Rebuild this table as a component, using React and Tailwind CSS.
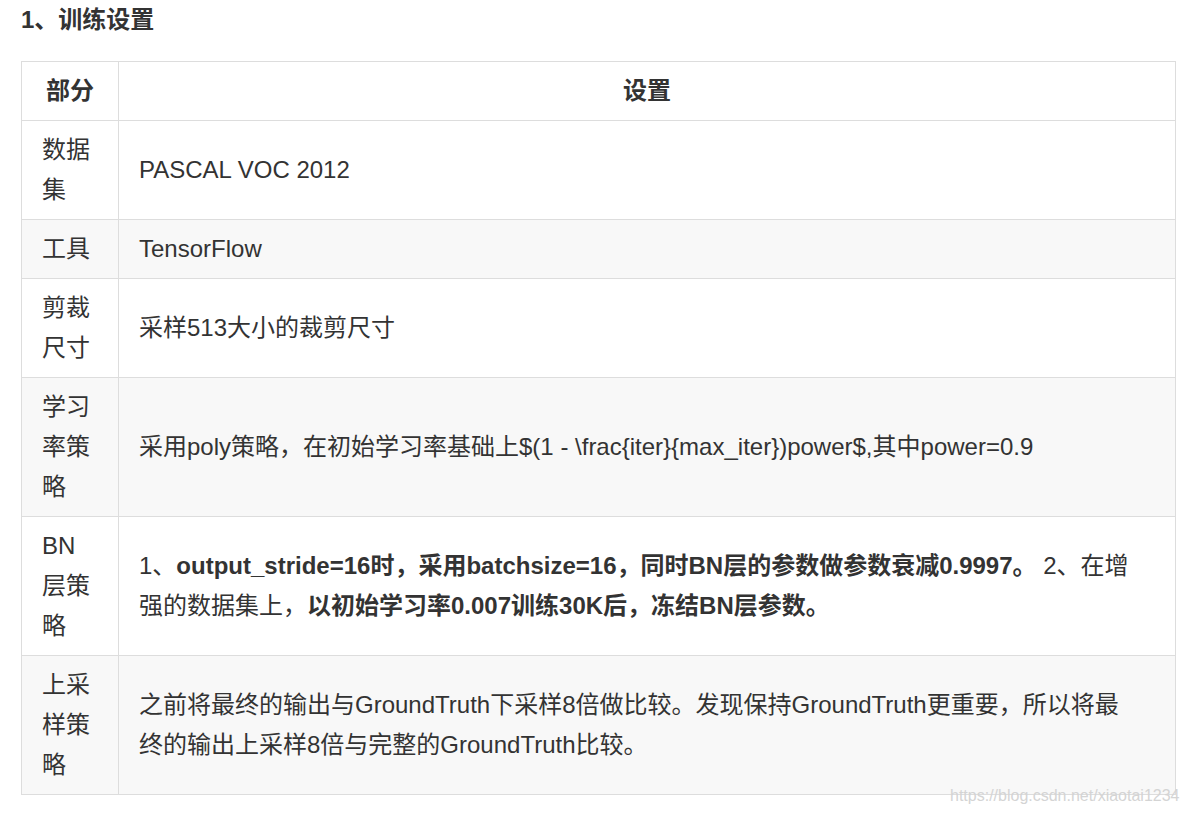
const rows = [
  { part: "数据集", content: <>PASCAL VOC 2012</> },
  { part: "工具", content: <>TensorFlow</> },
  { part: "剪裁尺寸", content: <>采样513大小的裁剪尺寸</> },
  {
    part: "学习率策略",
    content: <>采用poly策略，在初始学习率基础上$(1 - \frac{"{iter}{max_iter}"})power$,其中power=0.9</>,
  },
  {
    part: "BN层策略",
    content: (
      <>
        1、<strong>output_stride=16时，采用batchsize=16，同时BN层的参数做参数衰减0.9997。</strong> 2、在增强的数据集上，
        <strong>以初始学习率0.007训练30K后，冻结BN层参数。</strong>
      </>
    ),
  },
  {
    part: "上采样策略",
    content: <>之前将最终的输出与GroundTruth下采样8倍做比较。发现保持GroundTruth更重要，所以将最终的输出上采样8倍与完整的GroundTruth比较。</>,
  },
];

const App = () => {
  return (
    <div
      className="relative w-[1187px] h-[815px] bg-white text-[#333] pl-[21px]"
      style={{ fontFamily: '"Liberation Sans", "Noto Sans CJK SC", sans-serif' }}
    >
      <h3 className="text-[24px] leading-[40px] font-bold mb-[21px]">1、训练设置</h3>
      <table className="w-[1155px] border-collapse text-[24px] leading-[40px] table-fixed">
        <colgroup>
          <col className="w-[97px]" />
          <col />
        </colgroup>
        <thead>
          <tr className="bg-white">
            <th className="border border-[#ddd] px-[20px] py-[9px] text-center font-bold">部分</th>
            <th className="border border-[#ddd] px-[20px] py-[9px] text-center font-bold">设置</th>
          </tr>
        </thead>
        <tbody>
          {rows.map((r, i) => (
            <tr key={i} className={i % 2 === 1 ? "bg-[#f8f8f8]" : "bg-white"}>
              <td className="border border-[#ddd] px-[20px] py-[9px] align-middle break-all">{r.part}</td>
              <td className="border border-[#ddd] pl-[20px] pr-[36px] py-[9px] align-middle">{r.content}</td>
            </tr>
          ))}
        </tbody>
      </table>
      <div className="absolute left-[950px] top-[786px] text-[16px] leading-[20px] text-[#d4d4d4]">
        https://blog.csdn.net/xiaotai1234
      </div>
    </div>
  );
};

export default App;
